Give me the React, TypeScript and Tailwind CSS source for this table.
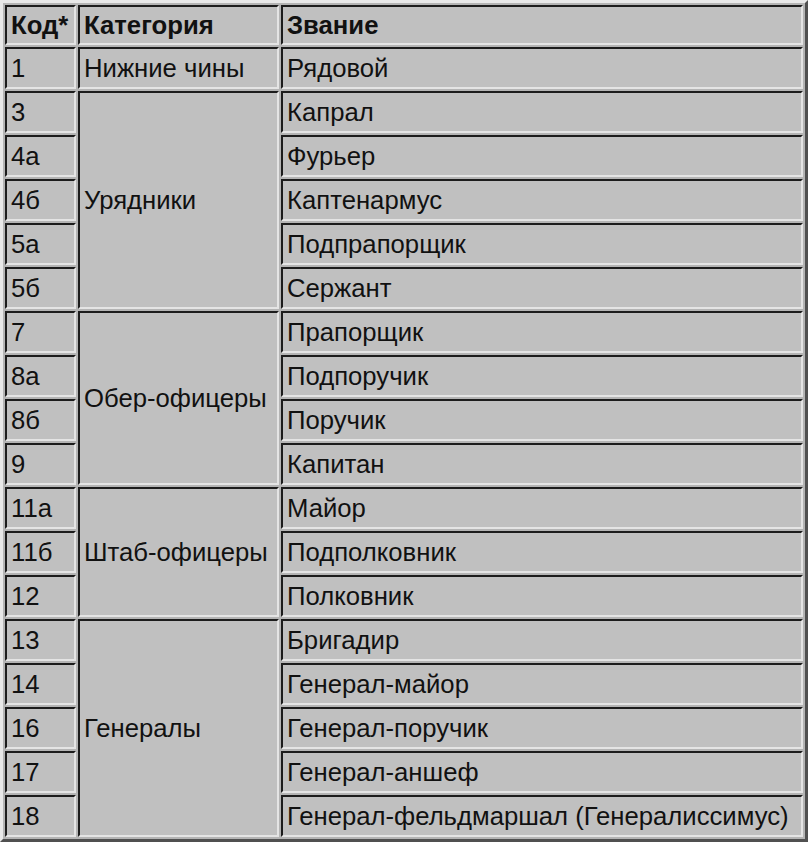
import React from "react";

type Row = { code: string; cat?: string; span?: number; rank: string };

const rows: Row[] = [
  { code: "1", cat: "Нижние чины", span: 1, rank: "Рядовой" },
  { code: "3", cat: "Урядники", span: 5, rank: "Капрал" },
  { code: "4а", rank: "Фурьер" },
  { code: "4б", rank: "Каптенармус" },
  { code: "5а", rank: "Подпрапорщик" },
  { code: "5б", rank: "Сержант" },
  { code: "7", cat: "Обер-офицеры", span: 4, rank: "Прапорщик" },
  { code: "8а", rank: "Подпоручик" },
  { code: "8б", rank: "Поручик" },
  { code: "9", rank: "Капитан" },
  { code: "11а", cat: "Штаб-офицеры", span: 3, rank: "Майор" },
  { code: "11б", rank: "Подполковник" },
  { code: "12", rank: "Полковник" },
  { code: "13", cat: "Генералы", span: 5, rank: "Бригадир" },
  { code: "14", rank: "Генерал-майор" },
  { code: "16", rank: "Генерал-поручик" },
  { code: "17", rank: "Генерал-аншеф" },
  { code: "18", rank: "Генерал-фельдмаршал (Генералиссимус)" },
];

const cell =
  "bg-[#c0c0c0] border-2 border-t-[#1c1c1c] border-l-[#1c1c1c] border-b-[#e4e4e4] border-r-[#e4e4e4] px-[4px] pt-[2px] pb-0 text-left align-middle whitespace-nowrap";

export default function App() {
  return (
    <div className="w-[808px] h-[842px] bg-[#b8b8b8] overflow-hidden">
      <table
        className="table-fixed border-separate border-spacing-[2px] w-[808px] border-[3px] border-t-[#e8e8e8] border-l-[#e8e8e8] border-b-[#505050] border-r-[#505050] bg-[#b4b4b4] text-[25.7px] leading-none text-[#111]"
        style={{ fontFamily: '"Liberation Sans", Arial, sans-serif' }}
      >
        <colgroup>
          <col className="w-[71px]" />
          <col className="w-[201px]" />
          <col />
        </colgroup>
        <thead>
          <tr className="h-[40px]">
            <th className={cell + " font-bold"}>Код*</th>
            <th className={cell + " font-bold"}>Категория</th>
            <th className={cell + " font-bold"}>Звание</th>
          </tr>
        </thead>
        <tbody>
          {rows.map((r) => (
            <tr key={r.code} className="h-[42px]">
              <td className={cell}>{r.code}</td>
              {r.cat && (
                <td className={cell} rowSpan={r.span}>
                  {r.cat}
                </td>
              )}
              <td className={cell}>{r.rank}</td>
            </tr>
          ))}
        </tbody>
      </table>
    </div>
  );
}
